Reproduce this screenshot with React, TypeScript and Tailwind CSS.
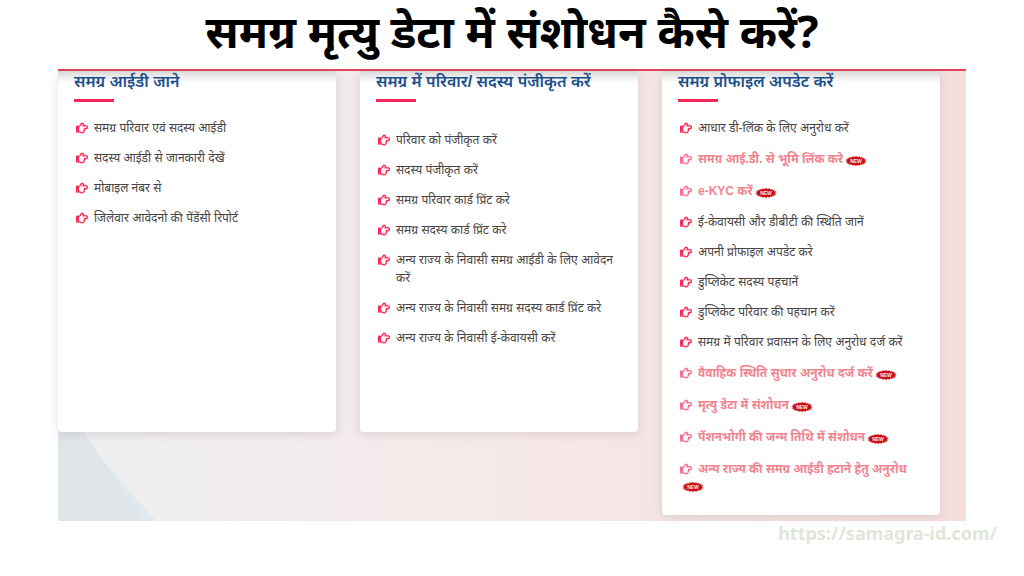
import React from "react";
import { FaRegHandPointRight } from "react-icons/fa";

type Item = {
  label: string;
  isNew?: boolean;
};

type CardProps = {
  title: string;
  items: Item[];
  listClass?: string;
};

const knowId: Item[] = [
  { label: "समग्र परिवार एवं सदस्य आईडी" },
  { label: "सदस्य आईडी से जानकारी देखें" },
  { label: "मोबाइल नंबर से" },
  { label: "जिलेवार आवेदनो की पेंडेंसी रिपोर्ट" },
];

const register: Item[] = [
  { label: "परिवार को पंजीकृत करें" },
  { label: "सदस्य पंजीकृत करें" },
  { label: "समग्र परिवार कार्ड प्रिंट करे" },
  { label: "समग्र सदस्य कार्ड प्रिंट करे" },
  { label: "अन्य राज्य के निवासी समग्र आईडी के लिए आवेदन करें" },
  { label: "अन्य राज्य के निवासी समग्र सदस्य कार्ड प्रिंट करे" },
  { label: "अन्य राज्य के निवासी ई-केवायसी करें" },
];

const updateProfile: Item[] = [
  { label: "आधार डी-लिंक के लिए अनुरोध करें" },
  { label: "समग्र आई.डी. से भूमि लिंक करे", isNew: true },
  { label: "e-KYC करें", isNew: true },
  { label: "ई-केवायसी और डीबीटी की स्थिति जानें" },
  { label: "अपनी प्रोफाइल अपडेट करे" },
  { label: "डुप्लिकेट सदस्य पहचानें" },
  { label: "डुप्लिकेट परिवार की पहचान करें" },
  { label: "समग्र में परिवार प्रवासन के लिए अनुरोध दर्ज करें" },
  { label: "वैवाहिक स्थिति सुधार अनुरोध दर्ज करें", isNew: true },
  { label: "मृत्यु डेटा में संशोधन", isNew: true },
  { label: "पेंशनभोगी की जन्म तिथि में संशोधन", isNew: true },
  { label: "अन्य राज्य की समग्र आईडी हटाने हेतु अनुरोध", isNew: true },
];

// 20 spikes around an ellipse
const burst = Array.from({ length: 40 }, (_, i) => {
  const angle = (i * Math.PI) / 20;
  const outer = i % 2 === 0;
  const x = 11 + (outer ? 11 : 9) * Math.cos(angle);
  const y = 5 + (outer ? 5 : 4) * Math.sin(angle);
  return `${x.toFixed(1)},${y.toFixed(1)}`;
}).join(" ");

function NewBadge() {
  return (
    <svg className="ml-[2px] mt-[3px] h-[10px] w-[22px] shrink-0" viewBox="0 0 22 10">
      <polygon points={burst} fill="#c90f14" />
      <text
        x="11"
        y="7"
        textAnchor="middle"
        fontSize="5"
        fontWeight="700"
        fill="#ffe9e9"
        fontFamily="Liberation Sans, sans-serif"
      >
        NEW
      </text>
    </svg>
  );
}

function ListItem({ label, isNew }: Item) {
  return (
    <li className={isNew ? "flex flex-wrap items-center leading-5" : "flex items-start leading-[18px]"}>
      <FaRegHandPointRight
        className={
          isNew
            ? "mr-[6px] h-3 w-3 shrink-0 stroke-current stroke-[14px] text-[#fa6c8f]"
            : "mr-[6px] mt-[3px] h-3 w-3 shrink-0 stroke-current stroke-[14px] text-[#f9285a]"
        }
      />
      <a
        href="#"
        className={isNew ? "max-w-[calc(100%-18px)] font-bold text-[#ef8590]" : "text-[#4a4444]"}
      >
        {label}
      </a>
      {isNew && <NewBadge />}
    </li>
  );
}

function Card({ title, items, listClass = "mt-[17px]" }: CardProps) {
  return (
    <section className="min-h-[361px] rounded-b bg-white bg-linear-to-b from-[#d9d9d9] to-white to-[12px] pb-[23px] pl-4 pr-5 pt-px shadow-[0_2px_10px_rgba(90,70,70,0.16)]">
      <h2 className="whitespace-nowrap text-base font-semibold leading-5 text-[#1a4f8b]">{title}</h2>
      <div className="mt-[7px] h-[3px] w-10 bg-[#f5265a]" />
      <ul className={`flex flex-col gap-3 pl-[2px] text-xs ${listClass}`}>
        {items.map((item) => (
          <ListItem key={item.label} {...item} />
        ))}
      </ul>
    </section>
  );
}

function App() {
  return (
    <div className="bg-white font-['Liberation_Sans','Noto_Sans_Devanagari','Noto_Sans',sans-serif]">
      <h1 className="h-[69px] whitespace-nowrap text-center font-['Noto_Sans','Noto_Sans_Devanagari',sans-serif] text-[45px] font-bold leading-[62px] text-black">
        समग्र मृत्यु डेटा में संशोधन कैसे करें?
      </h1>
      <main className="relative mx-[58px] border-t-2 border-[#e2445c] bg-linear-to-r from-[#eeeff0] via-[#f5e9e8] to-[#f4dfde] pb-[6px] pr-[26px]">
        <div className="absolute bottom-0 left-0 h-28 w-[98px] bg-[#dfeaee] [clip-path:polygon(0_0,100%_100%,0_100%)]" />
        <div className="absolute bottom-0 left-0 h-28 w-[86px] bg-[#e0e5ea] [clip-path:polygon(0_0,20%_10%,100%_100%,0_100%)]" />
        <div className="relative grid grid-cols-3 items-start gap-6">
          <Card title="समग्र आईडी जाने" items={knowId} />
          <Card title="समग्र में परिवार/ सदस्य पंजीकृत करें" items={register} listClass="mt-[29px]" />
          <Card title="समग्र प्रोफाइल अपडेट करें" items={updateProfile} />
        </div>
      </main>
      <footer className="mr-[27px] text-right font-['Noto_Sans',sans-serif] text-lg font-bold leading-6 text-[#e1e6da]">
        <a href="https://samagra-id.com/">https://samagra-id.com/</a>
      </footer>
    </div>
  );
}

export default App;
